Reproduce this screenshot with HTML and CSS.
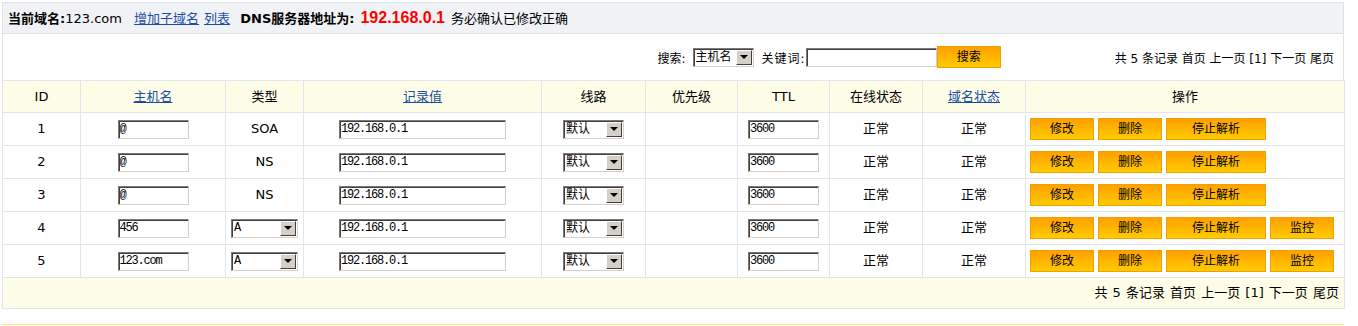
FILE: index.html
```html
<!DOCTYPE html>
<html lang="zh-CN">
<head>
<meta charset="utf-8">
<title>域名解析管理</title>
<link rel="stylesheet" href="styles.css">
</head>
<body>
<div class="wrap">
  <div class="topbar">
    <b>当前域名:</b><span>123.com</span>
    <a class="g8" href="#">增加子域名</a><a class="g5" href="#">列表</a>
    <b class="g6">DNS服务器地址为:</b><span class="ip g6">192.168.0.1</span><span class="g6">务必确认已修改正确</span>
  </div>
  <div class="toolbar">
    <form class="search">
      <span>搜索:</span>
      <span class="sel s-search"><span class="val">主机名</span><span class="arr"></span></span>
      <span class="kw">关键词:</span>
      <input class="txt kwinput" value="">
      <button class="btn sbtn" type="button">搜索</button>
    </form>
    <div class="pager">共 5 条记录 首页 上一页 [1] 下一页 尾页</div>
  </div>
  <table class="grid">
    <colgroup>
      <col class="c-id"><col class="c-host"><col class="c-type"><col class="c-val"><col class="c-line">
      <col class="c-pri"><col class="c-ttl"><col class="c-on"><col class="c-st"><col class="c-op">
    </colgroup>
    <thead>
      <tr>
        <th>ID</th>
        <th><a href="#">主机名</a></th>
        <th>类型</th>
        <th><a href="#">记录值</a></th>
        <th>线路</th>
        <th>优先级</th>
        <th>TTL</th>
        <th>在线状态</th>
        <th><a href="#">域名状态</a></th>
        <th>操作</th>
      </tr>
    </thead>
    <tbody>
      <tr>
        <td>1</td>
        <td><input class="txt w-host" value="@"></td>
        <td>SOA</td>
        <td><input class="txt w-val" value="192.168.0.1"></td>
        <td><span class="sel s-line"><span class="val">默认</span><span class="arr"></span></span></td>
        <td></td>
        <td><input class="txt w-ttl" value="3600"></td>
        <td>正常</td>
        <td>正常</td>
        <td class="ops"><button class="btn" type="button">修改</button><button class="btn" type="button">删除</button><button class="btn wide" type="button">停止解析</button></td>
      </tr>
      <tr>
        <td>2</td>
        <td><input class="txt w-host" value="@"></td>
        <td>NS</td>
        <td><input class="txt w-val" value="192.168.0.1"></td>
        <td><span class="sel s-line"><span class="val">默认</span><span class="arr"></span></span></td>
        <td></td>
        <td><input class="txt w-ttl" value="3600"></td>
        <td>正常</td>
        <td>正常</td>
        <td class="ops"><button class="btn" type="button">修改</button><button class="btn" type="button">删除</button><button class="btn wide" type="button">停止解析</button></td>
      </tr>
      <tr>
        <td>3</td>
        <td><input class="txt w-host" value="@"></td>
        <td>NS</td>
        <td><input class="txt w-val" value="192.168.0.1"></td>
        <td><span class="sel s-line"><span class="val">默认</span><span class="arr"></span></span></td>
        <td></td>
        <td><input class="txt w-ttl" value="3600"></td>
        <td>正常</td>
        <td>正常</td>
        <td class="ops"><button class="btn" type="button">修改</button><button class="btn" type="button">删除</button><button class="btn wide" type="button">停止解析</button></td>
      </tr>
      <tr>
        <td>4</td>
        <td><input class="txt w-host" value="456"></td>
        <td><span class="sel s-type"><span class="val mono">A</span><span class="arr"></span></span></td>
        <td><input class="txt w-val" value="192.168.0.1"></td>
        <td><span class="sel s-line"><span class="val">默认</span><span class="arr"></span></span></td>
        <td></td>
        <td><input class="txt w-ttl" value="3600"></td>
        <td>正常</td>
        <td>正常</td>
        <td class="ops"><button class="btn" type="button">修改</button><button class="btn" type="button">删除</button><button class="btn wide" type="button">停止解析</button><button class="btn" type="button">监控</button></td>
      </tr>
      <tr>
        <td>5</td>
        <td><input class="txt w-host" value="123.com"></td>
        <td><span class="sel s-type"><span class="val mono">A</span><span class="arr"></span></span></td>
        <td><input class="txt w-val" value="192.168.0.1"></td>
        <td><span class="sel s-line"><span class="val">默认</span><span class="arr"></span></span></td>
        <td></td>
        <td><input class="txt w-ttl" value="3600"></td>
        <td>正常</td>
        <td>正常</td>
        <td class="ops"><button class="btn" type="button">修改</button><button class="btn" type="button">删除</button><button class="btn wide" type="button">停止解析</button><button class="btn" type="button">监控</button></td>
      </tr>
    </tbody>
    <tfoot>
      <tr>
        <td colspan="10" class="foot">共 5 条记录 首页 上一页 [1] 下一页 尾页</td>
      </tr>
    </tfoot>
  </table>
  <div class="note"></div>
</div>
</body>
</html>
```
FILE: styles.css
```css
html, body {
  background: #fff;
}
body {
  margin: 2px;
  font-family: "DejaVu Sans", "Noto Sans CJK SC", sans-serif;
  font-size: 13px;
  color: #000;
}
a {
  color: #1c4ea6;
  text-decoration: underline;
}
.wrap {
  width: 1342px;
}

/* top bar */
.topbar {
  box-sizing: border-box;
  height: 32px;
  line-height: 30px;
  border: 1px solid #dde2e9;
  background: #f0f2f5;
  padding-left: 5px;
  white-space: nowrap;
  font-size: 13px;
}
.topbar b {
  font-weight: bold;
}
.g5 { margin-left: 5px; }
.g6 { margin-left: 6px; }
.g8 { margin-left: 8px; }
.ip {
  color: #ff0000;
  font-family: "Liberation Sans", sans-serif;
  font-weight: bold;
  font-size: 16px;
}

/* toolbar */
.toolbar {
  box-sizing: border-box;
  height: 46px;
  border-left: 1px solid #dde2e9;
  border-right: 1px solid #dde2e9;
  display: flex;
  justify-content: flex-end;
  align-items: center;
  padding-right: 9px;
  font-size: 12px;
}
.search {
  display: flex;
  align-items: center;
  margin: 0 114px 0 0;
}
.search .sel { margin-left: 7px; }
.search .kw { margin-left: 8px; letter-spacing: 1px; }
.kwinput { margin-left: 3px; width: 131px; }
.sbtn { margin-left: 6px; }
.pager {
  white-space: nowrap;
}

/* inputs */
.txt {
  box-sizing: border-box;
  height: 19px;
  margin: 0;
  padding: 0 0 0 1px;
  border: 1px solid;
  border-color: #7a7a7a #d4d0c8 #d4d0c8 #7a7a7a;
  box-shadow: inset 1px 1px 0 #404040;
  background: #fff;
  font-family: "Liberation Mono", monospace;
  font-size: 12px;
  letter-spacing: -1.2px;
  color: #000;
  vertical-align: middle;
  outline: none;
}
.w-host, .w-ttl { width: 71px; }
.w-val { width: 167px; }

/* custom select look */
.sel {
  box-sizing: border-box;
  display: inline-flex;
  align-items: center;
  justify-content: space-between;
  height: 19px;
  border: 1px solid;
  border-color: #7a7a7a #d4d0c8 #d4d0c8 #7a7a7a;
  box-shadow: inset 1px 1px 0 #404040;
  background: #fff;
  padding: 1px 1px 1px 2px;
  vertical-align: middle;
  font-size: 12px;
  line-height: 14px;
  text-align: left;
}
.s-search { width: 61px; }
.s-line { width: 61px; }
.s-type { width: 67px; }
.val.mono {
  font-family: "Liberation Mono", monospace;
  font-size: 12px;
}
.arr {
  box-sizing: border-box;
  width: 16px;
  height: 15px;
  background: #d4d0c8;
  border: 1px solid;
  border-color: #fff #404040 #404040 #fff;
  display: flex;
  align-items: center;
  justify-content: center;
}
.arr::after {
  content: "";
  width: 0;
  height: 0;
  border-left: 4px solid transparent;
  border-right: 4px solid transparent;
  border-top: 4px solid #000;
}

/* buttons */
.btn {
  box-sizing: border-box;
  width: 64px;
  height: 22px;
  margin: 0;
  padding: 0;
  border: 1px solid #f2a000;
  background: linear-gradient(#ffa000, #ffcb00);
  font-family: "DejaVu Sans", "Noto Sans CJK SC", sans-serif;
  font-size: 12px;
  color: #000;
  line-height: 18px;
  vertical-align: middle;
}
.btn.wide { width: 100px; }

/* grid */
.grid {
  width: 1342px;
  table-layout: fixed;
  border-collapse: collapse;
}
.c-id { width: 78px; }
.c-host { width: 145px; }
.c-type { width: 78px; }
.c-val { width: 238px; }
.c-line { width: 104px; }
.c-pri { width: 92px; }
.c-ttl { width: 92px; }
.c-on { width: 93px; }
.c-st { width: 103px; }
.c-op { width: 319px; }
.grid th, .grid td {
  border: 1px solid #e1e5ec;
  padding: 0;
  text-align: center;
  vertical-align: middle;
  line-height: 16px;
}
.grid th {
  height: 31px;
  background: #fefee8;
  font-weight: normal;
}
.grid tbody td {
  height: 32px;
}
.grid td.ops {
  text-align: left;
  padding-left: 4px;
  white-space: nowrap;
}
.ops .btn { margin-right: 4px; }
.grid td.foot {
  height: 30px;
  background: #fefee8;
  text-align: right;
  padding-right: 5px;
  word-spacing: 1px;
}

.note {
  margin-top: 15px;
  height: 10px;
  border-top: 1px solid #ffe38f;
  background: #fffde9;
}
```
